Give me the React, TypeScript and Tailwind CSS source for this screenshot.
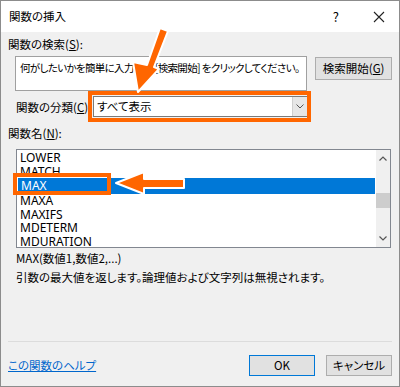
import React from 'react';

const jp = { fontFamily: '"Noto Sans CJK JP", "Noto Sans", sans-serif' };

const functions = ['LOWER', 'MATCH', 'MAX', 'MAXA', 'MAXIFS', 'MDETERM', 'MDURATION'];

const App = () => {
  return (
    <div
      className="relative w-[400px] h-[387px] bg-[#f0f0f0] border border-[#8c8c8c] text-[11.5px] text-black overflow-hidden [font-feature-settings:'palt']"
      style={jp}
    >
      {/* Title bar */}
      <div className="h-[31px] bg-white flex items-center pl-[8px] pr-[14px]">
        <span>関数の挿入</span>
        <span className="ml-auto mr-[34px] text-[13px]">?</span>
        <svg width="12" height="12" viewBox="0 0 12 12">
          <path d="M1 1 L11 11 M11 1 L1 11" stroke="#222" strokeWidth="1.1" />
        </svg>
      </div>

      <div className="px-[7px]">
        {/* Search */}
        <div className="mt-[4px] leading-[16px]">
          関数の検索(<u>S</u>):
        </div>
        <div className="flex mt-[4px]">
          <div className="ml-[7px] w-[293px] h-[35px] bg-white border border-[#a0a0a0] pl-[4px] pt-[3px] leading-[16px] whitespace-nowrap overflow-hidden text-[10.5px] tracking-[-0.65px]">
            何がしたいかを簡単に入力して、[検索開始] をクリックしてください。
          </div>
          <div className="ml-[8px] mt-[1px] w-[77px] h-[23px] bg-[#e1e1e1] border border-[#adadad] flex items-center justify-center">
            検索開始(<u>G</u>)
          </div>
        </div>

        {/* Category */}
        <div className="flex items-center mt-[5px] ml-[8px]">
          <span className="w-[77px] leading-[16px] whitespace-nowrap">関数の分類(<u>C</u>):</span>
          <div className="w-[215px] h-[21px] bg-white border border-[#7a7a7a] flex items-center">
            <span className="pl-[3px]">すべて表示</span>
            <div className="ml-auto w-[15px] h-full bg-[#e6e6e6] border-l border-[#cfcfcf] flex items-center justify-center">
              <svg width="8" height="5" viewBox="0 0 8 5">
                <path d="M0.5 0.5 L4 4 L7.5 0.5" stroke="#555" strokeWidth="1" fill="none" />
              </svg>
            </div>
          </div>
        </div>

        {/* Function list */}
        <div className="mt-[8px] leading-[16px]">
          関数名(<u>N</u>):
        </div>
        <div className="ml-[8px] mt-[8px] w-[375px] h-[99px] bg-white border border-[#828790] flex">
          <div className="flex-1 text-[12px] pt-[1px]" style={{ fontFamily: '"Noto Sans", sans-serif' }}>
            {functions.map((f) => (
              <div
                key={f}
                className={
                  'pl-[3px] ' +
                  (f === 'MAX'
                    ? 'mx-[1px] bg-[#0078d7] text-white h-[16px] leading-[16px]'
                    : 'h-[13.5px] leading-[13.5px]')
                }
              >
                {f}
              </div>
            ))}
          </div>
          <div className="w-[14px] h-full flex flex-col items-center bg-[#f0f0f0]">
            <div className="h-[17px] flex items-center justify-center">
              <svg width="8" height="5" viewBox="0 0 8 5">
                <path d="M0.5 4.5 L4 1 L7.5 4.5" stroke="#555" strokeWidth="1.2" fill="none" />
              </svg>
            </div>
            <div className="mt-[26px] w-full h-[15px] bg-[#cdcdcd]" />
            <div className="mt-auto h-[17px] flex items-center justify-center">
              <svg width="8" height="5" viewBox="0 0 8 5">
                <path d="M0.5 0.5 L4 4 L7.5 0.5" stroke="#555" strokeWidth="1.2" fill="none" />
              </svg>
            </div>
          </div>
        </div>

        {/* Description */}
        <div className="ml-[8px] mt-[2px] leading-[17px]">
          MAX(数値1,数値2,...)
        </div>
        <div className="ml-[8px] mt-[2px] leading-[17px]">
          引数の最大値を返します。論理値および文字列は無視されます。
        </div>

        {/* Separator */}
        <div className="mt-[55px] h-px bg-[#dcdcdc]" />

        {/* Footer */}
        <div className="flex items-center mt-[13px]">
          <span className="text-[#0066cc] underline">この関数のヘルプ</span>
          <div className="ml-auto w-[66px] h-[21px] bg-[#e1e1e1] border border-[#0078d7] flex items-center justify-center">
            OK
          </div>
          <div className="ml-[11px] w-[66px] h-[21px] bg-[#e1e1e1] border border-[#adadad] flex items-center justify-center">
            キャンセル
          </div>
        </div>
      </div>

      {/* Orange annotations */}
      <div className="absolute left-[87px] top-[90px] w-[223px] h-[31px] border-[4px] border-[#ff6600]" />
      <div className="absolute left-[12px] top-[172px] w-[98px] h-[22px] border-[4px] border-[#ff6600]" />
      <svg className="absolute left-0 top-0" width="400" height="387" viewBox="0 0 400 387">
        <g stroke="#ffffff" strokeWidth="2" strokeLinejoin="round" fill="#ff6600">
          <path d="M159 27 L167 30 L153 66 L158 68 L137 91 L132 61 L146 64 Z" />
          <path d="M115 182 L143 171 L143 178 L183 178 L183 187 L143 187 L143 193 Z" />
        </g>
      </svg>
    </div>
  );
};

export default App;
